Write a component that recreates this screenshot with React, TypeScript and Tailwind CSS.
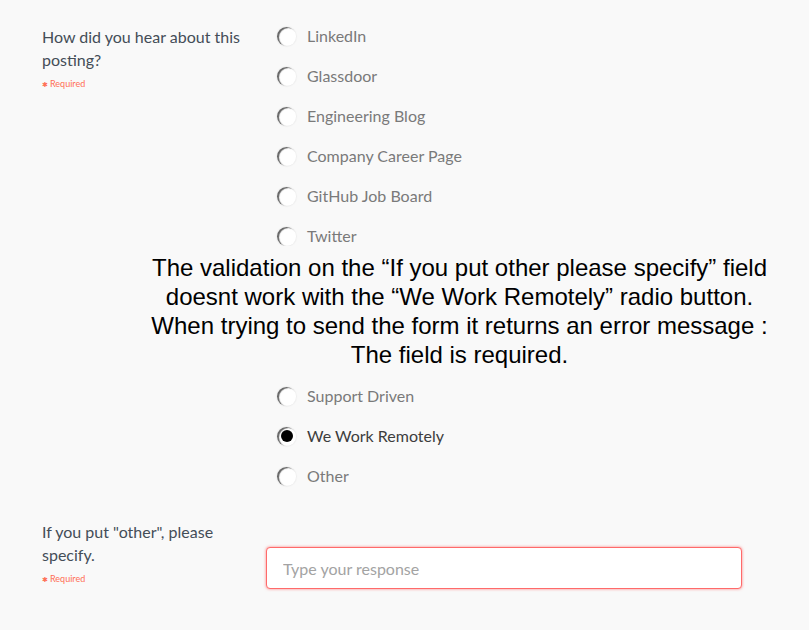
const firstOptions = [
  "LinkedIn",
  "Glassdoor",
  "Engineering Blog",
  "Company Career Page",
  "GitHub Job Board",
  "Twitter",
];

const lastOptions = ["Support Driven", "We Work Remotely", "Other"];

const Required = () => (
  <div className="mt-[6px] flex items-center gap-[2px] text-[9px] leading-[14px] text-[#ff6f55]">
    <span className="text-[7px]">✱</span>
    <span>Required</span>
  </div>
);

const Radio = ({ checked }: { checked: boolean }) => (
  <span className="flex h-[19px] w-[19px] shrink-0 items-center justify-center rounded-full bg-white shadow-[inset_2px_1px_1px_#666,0_0_1px_1px_#efefef]">
    {checked && <span className="h-[12px] w-[12px] rounded-full bg-black"></span>}
  </span>
);

const Option = ({ label, checked }: { label: string; checked: boolean }) => (
  <label className="flex h-10 items-center gap-[11px]">
    <Radio checked={checked} />
    <span className={checked ? "text-[#3d3d3d]" : "text-[#7a7a7a]"}>{label}</span>
  </label>
);

export default function App() {
  const selected = "We Work Remotely";
  return (
    <div
      className="min-h-screen bg-[#f9f9f9] text-[16px]"
      style={{ fontFamily: "Lato, 'Open Sans', sans-serif" }}
    >
      {/* How did you hear */}
      <div className="flex gap-[14px] px-[42px] pt-4">
        <div className="w-[210px] shrink-0 pt-[9px]">
          <div className="leading-[23px] text-[#444d57]">How did you hear about this posting?</div>
          <Required />
        </div>
        <div className="flex flex-col pl-[11px]">
          {firstOptions.map((o) => (
            <Option key={o} label={o} checked={o === selected} />
          ))}
        </div>
      </div>

      {/* Bug note */}
      <div
        className="relative -mt-[10px] ml-[110px] h-[130px] bg-[#f9f9f9] pt-[7px] text-center text-[24px] leading-[29px] text-black"
        style={{ fontFamily: "'Liberation Sans', Arial, sans-serif" }}
      >
        The validation on the “If you put other please specify” field
        <br />
        doesnt work with the “We Work Remotely” radio button.
        <br />
        When trying to send the form it returns an error message :
        <br />
        The field is required.
      </div>

      <div className="flex flex-col pl-[277px]">
        {lastOptions.map((o) => (
          <Option key={o} label={o} checked={o === selected} />
        ))}
      </div>

      {/* Other, please specify */}
      <div className="mt-6 flex gap-[14px] px-[42px]">
        <div className="w-[210px] shrink-0">
          <div className="leading-[23px] text-[#444d57]">If you put "other", please specify.</div>
          <Required />
        </div>
        <div className="mt-[27px]">
          <input
            type="text"
            placeholder="Type your response"
            className="h-[42px] w-[476px] rounded-[4px] border border-[#ff6a6a] bg-white pl-4 text-[16px] text-[#444] shadow-[0_0_3px_rgba(255,80,80,0.7)] outline-none placeholder:text-[#a3a3a3]"
          />
        </div>
      </div>
    </div>
  );
}
